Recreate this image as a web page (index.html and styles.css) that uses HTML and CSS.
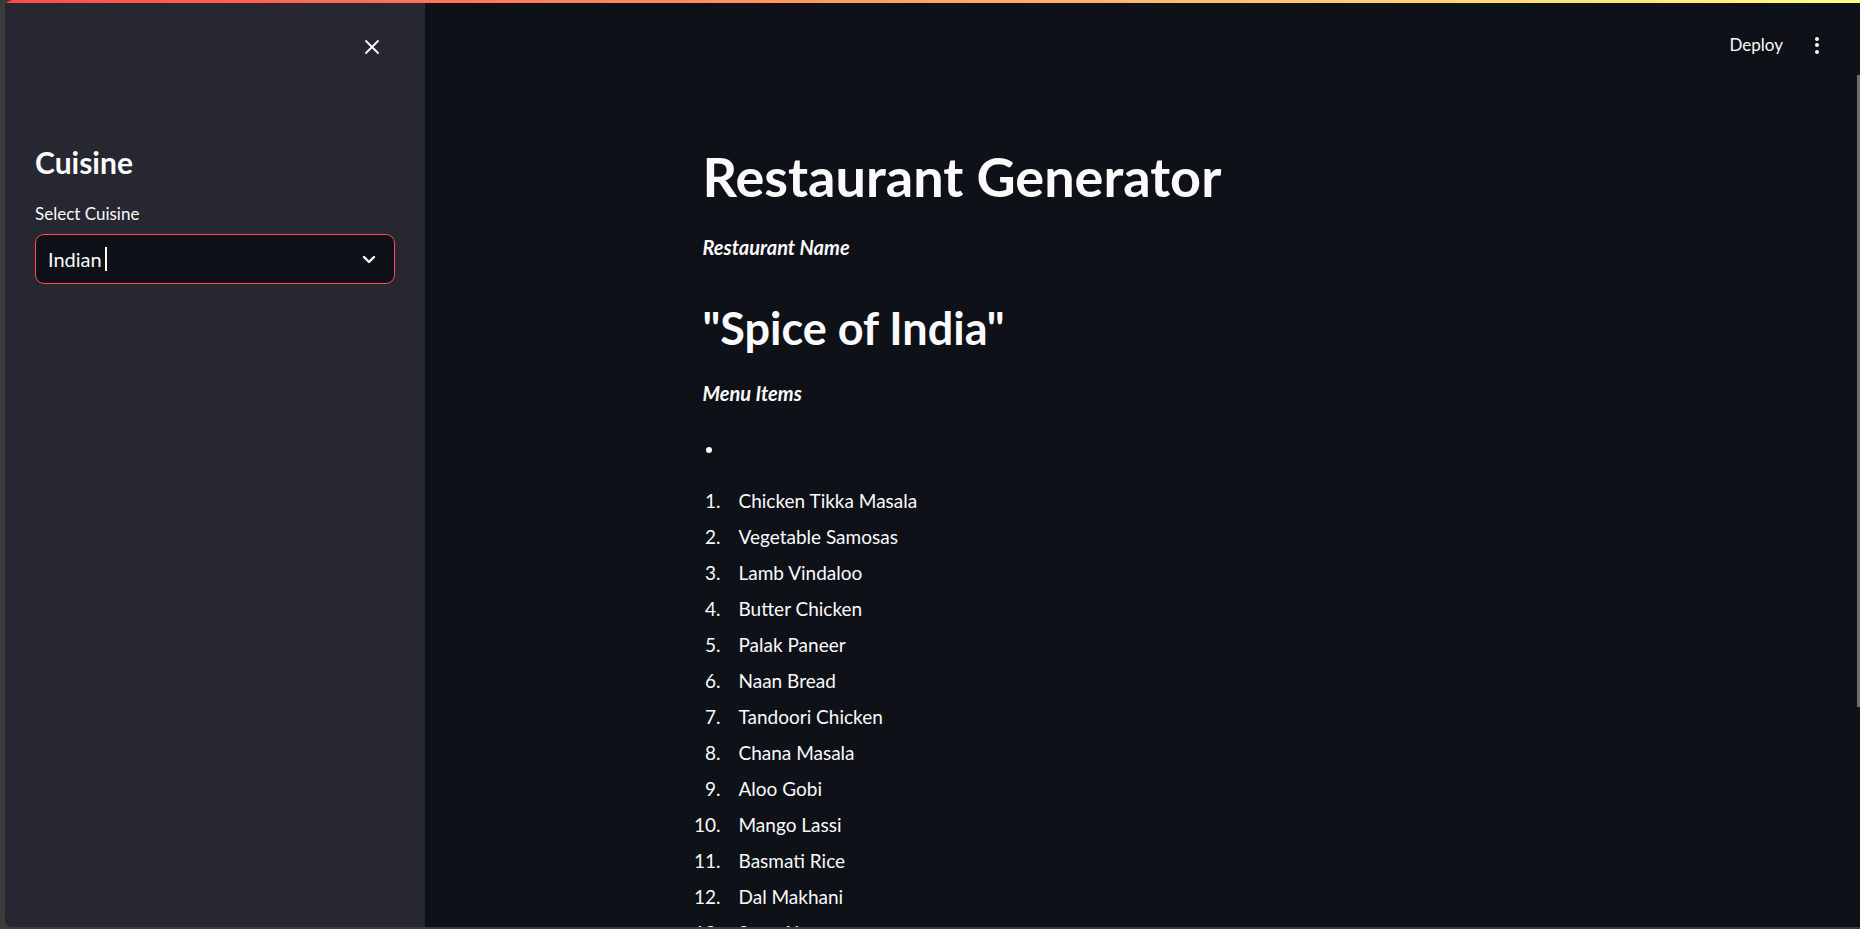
FILE: index.html
```html
<!DOCTYPE html>
<html lang="en">
<head>
<meta charset="utf-8">
<title>Restaurant Generator</title>
<link rel="stylesheet" href="styles.css">
</head>
<body>
<div class="window">
  <div class="decoration"></div>
  <aside class="sidebar">
    <div class="sidebar-top">
      <button class="close-btn" aria-label="Close sidebar">
        <svg width="16" height="16" viewBox="0 0 16 16"><path d="M2 2 L14 14 M14 2 L2 14" stroke="#fafafa" stroke-width="1.8" stroke-linecap="round" fill="none"/></svg>
      </button>
    </div>
    <h2 class="side-heading">Cuisine</h2>
    <label class="field-label">Select Cuisine</label>
    <div class="select">
      <span class="select-value">Indian</span><span class="caret"></span>
      <svg class="chevron" width="14" height="9" viewBox="0 0 14 9"><path d="M2 2 L7 7 L12 2" stroke="#fafafa" stroke-width="2.4" stroke-linecap="round" stroke-linejoin="round" fill="none"/></svg>
    </div>
  </aside>
  <main class="main">
    <header class="topbar">
      <span class="deploy">Deploy</span>
      <span class="kebab"><i></i><i></i><i></i></span>
    </header>
    <section class="content">
      <h1 class="title">Restaurant Generator</h1>
      <p class="emph">Restaurant Name</p>
      <h2 class="name">"Spice of India"</h2>
      <p class="emph menu-label">Menu Items</p>
      <ul class="bullets"><li></li></ul>
      <ol class="menu">
        <li><span class="num">1.</span><span>Chicken Tikka Masala</span></li>
        <li><span class="num">2.</span><span>Vegetable Samosas</span></li>
        <li><span class="num">3.</span><span>Lamb Vindaloo</span></li>
        <li><span class="num">4.</span><span>Butter Chicken</span></li>
        <li><span class="num">5.</span><span>Palak Paneer</span></li>
        <li><span class="num">6.</span><span>Naan Bread</span></li>
        <li><span class="num">7.</span><span>Tandoori Chicken</span></li>
        <li><span class="num">8.</span><span>Chana Masala</span></li>
        <li><span class="num">9.</span><span>Aloo Gobi</span></li>
        <li><span class="num">10.</span><span>Mango Lassi</span></li>
        <li><span class="num">11.</span><span>Basmati Rice</span></li>
        <li><span class="num">12.</span><span>Dal Makhani</span></li>
        <li><span class="num">13.</span><span>Saag Aloo</span></li>
      </ol>
    </section>
    <div class="scroll-thumb"></div>
  </main>
</div>
</body>
</html>
```
FILE: styles.css
```css
* { box-sizing: border-box; }
html, body {
  margin: 0;
  padding: 0;
  width: 1860px;
  height: 929px;
  overflow: hidden;
  background: #3a3b3c;
  font-family: Lato, "Noto Sans", sans-serif;
  color: #fafafa;
}
.window {
  position: relative;
  margin-left: 5px;
  height: 927px;
  display: flex;
  border-radius: 8px 0 0 8px;
  overflow: hidden;
  background: #0e1117;
}
.decoration {
  position: absolute;
  top: 0; left: 0; right: 0;
  height: 3px;
  background: linear-gradient(90deg, #ff4b4b, #fffd80);
  z-index: 5;
}
.sidebar {
  width: 420px;
  flex: none;
  background: #262730;
  padding: 0 30px;
  display: flex;
  flex-direction: column;
}
.sidebar-top {
  height: 94px;
  display: flex;
  justify-content: flex-end;
  align-items: center;
  padding-right: 15px;
}
.close-btn {
  background: none;
  border: 0;
  padding: 0;
  width: 16px;
  height: 16px;
  display: flex;
}
.side-heading {
  margin: 50px 0 0;
  font-size: 30px;
  line-height: 36px;
  font-weight: 700;
}
.field-label {
  margin-top: 22px;
  font-size: 17px;
  line-height: 24px;
}
.select {
  margin-top: 8px;
  height: 50px;
  border: 1px solid #ff4b4b;
  border-radius: 9px;
  background: #0e1117;
  display: flex;
  align-items: center;
  padding: 0 18px 0 12px;
  font-size: 20px;
}
.caret {
  width: 2px;
  height: 24px;
  background: #fafafa;
  margin-left: 3px;
}
.chevron { margin-left: auto; }
.main {
  flex: 1;
  position: relative;
  display: flex;
  flex-direction: column;
}
.topbar {
  height: 90px;
  display: flex;
  justify-content: flex-end;
  align-items: center;
  padding-right: 31px;
  flex: none;
}
.deploy {
  font-size: 17px;
  line-height: 24px;
}
.kebab {
  width: 24px;
  margin-left: 22px;
  display: flex;
  flex-direction: column;
  align-items: center;
  gap: 2.5px;
}
.kebab i {
  width: 4px;
  height: 4px;
  border-radius: 50%;
  background: #fafafa;
}
.content {
  width: 920px;
  margin: 0 auto;
  padding: 54px 20px 0;
}
.title {
  margin: 0;
  font-size: 54px;
  line-height: 66px;
  font-weight: 700;
}
.emph {
  margin: 22px 0 0;
  font-size: 20px;
  line-height: 30px;
  font-weight: 700;
  font-style: italic;
}
.name {
  margin: 39px 0 0;
  font-size: 45px;
  line-height: 54px;
  font-weight: 700;
}
.menu-label { margin-top: 23px; }
.bullets {
  margin: 27px 0 0;
  padding: 0;
  list-style: none;
}
.bullets li {
  height: 30px;
  display: flex;
  align-items: center;
}
.bullets li::before {
  content: "";
  width: 6px;
  height: 6px;
  border-radius: 50%;
  background: #fafafa;
  margin-left: 3px;
}
.menu {
  margin: 21px 0 0 -20px;
  padding: 0;
  list-style: none;
  display: flex;
  flex-direction: column;
  gap: 6px;
  font-size: 19px;
  line-height: 30px;
}
.menu li {
  display: grid;
  grid-template-columns: 38px 1fr;
  column-gap: 18px;
}
.num { text-align: right; }
.scroll-thumb {
  position: absolute;
  right: 0;
  top: 75px;
  width: 3px;
  height: 632px;
  background: #6d6e72;
}
```
